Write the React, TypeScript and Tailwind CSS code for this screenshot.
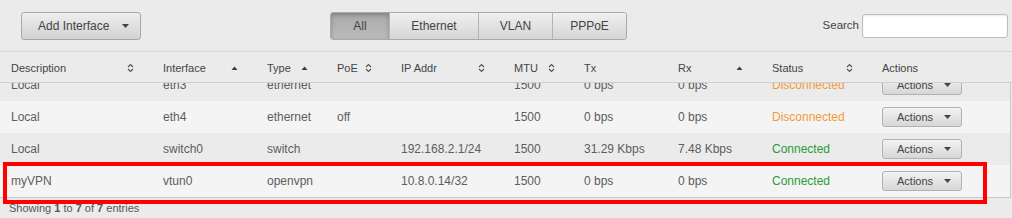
import React from "react";

const COLS =
  "grid grid-cols-[152px_104px_70px_64px_113px_70px_94px_94px_110px_1fr]";

type Sort = "both" | "asc" | null;

const HEADERS: { label: string; sort: Sort }[] = [
  { label: "Description", sort: "both" },
  { label: "Interface", sort: "asc" },
  { label: "Type", sort: "asc" },
  { label: "PoE", sort: "both" },
  { label: "IP Addr", sort: "both" },
  { label: "MTU", sort: "both" },
  { label: "Tx", sort: null },
  { label: "Rx", sort: "asc" },
  { label: "Status", sort: "both" },
  { label: "Actions", sort: null },
];

type Row = {
  desc: string;
  iface: string;
  type: string;
  poe: string;
  ip: string;
  mtu: string;
  tx: string;
  rx: string;
  connected: boolean;
};

const ROWS: Row[] = [
  { desc: "Local", iface: "eth3", type: "ethernet", poe: "", ip: "", mtu: "1500", tx: "0 bps", rx: "0 bps", connected: false },
  { desc: "Local", iface: "eth4", type: "ethernet", poe: "off", ip: "", mtu: "1500", tx: "0 bps", rx: "0 bps", connected: false },
  { desc: "Local", iface: "switch0", type: "switch", poe: "", ip: "192.168.2.1/24", mtu: "1500", tx: "31.29 Kbps", rx: "7.48 Kbps", connected: true },
  { desc: "myVPN", iface: "vtun0", type: "openvpn", poe: "", ip: "10.8.0.14/32", mtu: "1500", tx: "0 bps", rx: "0 bps", connected: true },
];

function Caret() {
  return (
    <svg width="7" height="4" viewBox="0 0 7 4" className="shrink-0">
      <path d="M0 0 L7 0 L3.5 4 Z" fill="#444" />
    </svg>
  );
}

function SortIcon({ sort }: { sort: Sort }) {
  if (sort === "asc")
    return (
      <svg width="7" height="4" viewBox="0 0 7 4" className="shrink-0">
        <path d="M0.5 4 L3.5 0.5 L6.5 4 Z" fill="#3d3d3d" />
      </svg>
    );
  if (sort === "both")
    return (
      <svg width="7" height="10" viewBox="0 0 7 10" className="shrink-0">
        <path d="M1 4 L3.5 1.5 L6 4 M1 6 L3.5 8.5 L6 6" fill="none" stroke="#555" strokeWidth="1.2" />
      </svg>
    );
  return null;
}

function ActionsButton() {
  return (
    <button className="flex h-[20px] w-[80px] items-center justify-between rounded-[3px] border border-[#b2b2b2] bg-linear-to-b from-[#f3f3f3] to-[#d6d6d6] pl-[14px] pr-[10px] text-[11px] text-[#444]">
      <span>Actions</span>
      <Caret />
    </button>
  );
}

export default function App() {
  return (
    <div className="relative h-[218px] w-[1012px] overflow-hidden bg-[#ebebeb] font-['Liberation_Sans',Arial,sans-serif] text-[#5d5d5d]">
      {/* toolbar */}
      <div className="flex h-[52px] items-center border-b border-[#d6d6d6] pl-[21px] pr-[4px]">
        <button className="flex h-[28px] w-[120px] items-center justify-between rounded-[3px] border border-[#a9a9a9] bg-linear-to-b from-[#eeeeee] to-[#d2d2d2] pl-[16px] pr-[11px] text-[12px] text-[#444]">
          <span>Add Interface</span>
          <Caret />
        </button>

        <div className="ml-[189px] flex h-[28px] overflow-hidden rounded-[3px] border border-[#a9a9a9] text-[12px] text-[#444]">
          <div className="flex w-[58px] items-center justify-center bg-linear-to-b from-[#a9a9a9] to-[#bcbcbc] shadow-[inset_0_2px_4px_rgba(0,0,0,0.25)]">
            All
          </div>
          {[
            ["Ethernet", "w-[89px]"],
            ["VLAN", "w-[74px]"],
            ["PPPoE", "w-[74px]"],
          ].map(([label, w]) => (
            <div
              key={label}
              className={`flex ${w} items-center justify-center border-l border-[#b4b4b4] bg-linear-to-b from-[#f0f0f0] to-[#d5d5d5]`}
            >
              {label}
            </div>
          ))}
        </div>

        <div className="ml-auto flex items-center gap-[3px]">
          <span className="text-[11.5px] text-[#444]">Search</span>
          <input className="h-[24px] w-[146px] rounded-[3px] border border-[#bdbdbd] bg-white shadow-[inset_0_1px_2px_rgba(0,0,0,0.08)] outline-none" />
        </div>
      </div>

      {/* table header */}
      <div className={`${COLS} h-[31px] border-b border-[#cfcfcf] pt-[2px] text-[11px] text-[#444]`}>
        {HEADERS.map((h) => (
          <div key={h.label} className="flex items-center justify-between pl-[11px] pr-[18px]">
            <span>{h.label}</span>
            <SortIcon sort={h.sort} />
          </div>
        ))}
      </div>

      {/* table body, scrolled a little */}
      <div className="h-[115px] w-[1011px] overflow-hidden border-r border-b border-[#c8c8c8]">
        <div className="-mt-[14px]">
          {ROWS.map((r, i) => (
            <div
              key={r.iface}
              className={`${COLS} h-[32px] items-center text-[12px] ${i % 2 === 0 ? "bg-[#ebebeb]" : "bg-[#f4f4f4]"}`}
            >
              <div className="pl-[11px]">{r.desc}</div>
              <div className="pl-[11px]">{r.iface}</div>
              <div className="pl-[11px]">{r.type}</div>
              <div className="pl-[11px]">{r.poe}</div>
              <div className="pl-[11px]">{r.ip}</div>
              <div className="pl-[11px]">{r.mtu}</div>
              <div className="pl-[11px]">{r.tx}</div>
              <div className="pl-[11px]">{r.rx}</div>
              <div className={`pl-[11px] ${r.connected ? "text-[#2c9a3a]" : "text-[#f29b3a]"}`}>
                {r.connected ? "Connected" : "Disconnected"}
              </div>
              <div className="pl-[11px]">
                <ActionsButton />
              </div>
            </div>
          ))}
        </div>
      </div>

      {/* footer */}
      <div className="pl-[9px] pt-[2px] text-[11px] leading-4 text-[#555]">
        Showing <b>1</b> to <b>7</b> of <b>7</b> entries
      </div>

      {/* annotation */}
      <div className="pointer-events-none absolute left-[3px] top-[162px] h-[42px] w-[984px] border-4 border-[#ff0000]" />
    </div>
  );
}
